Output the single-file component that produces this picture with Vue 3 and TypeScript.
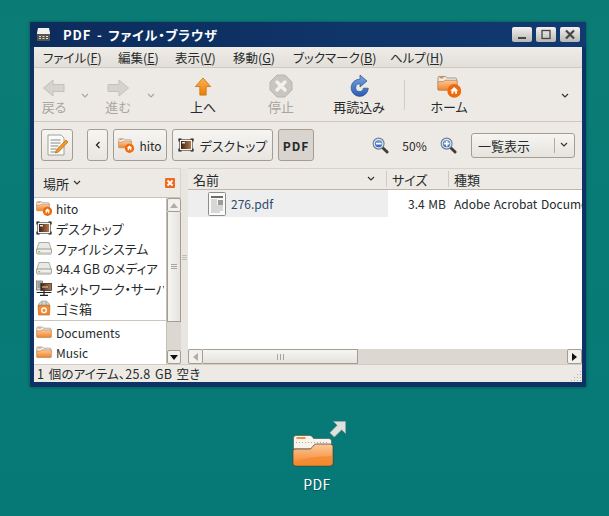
<script setup lang="ts">
const menus = [
  { label: "ファイル", key: "F", width: 75 },
  { label: "編集", key: "E", width: 57 },
  { label: "表示", key: "V", width: 58 },
  { label: "移動", key: "G", width: 60 },
  { label: "ブックマーク", key: "B", width: 97 },
  { label: "ヘルプ", key: "H", width: 70 },
];

const places = [
  { name: "hito", icon: "#i-home", latin: true },
  { name: "デスクトップ", icon: "#i-desktop" },
  { name: "ファイルシステム", icon: "#i-disk" },
  { name: "94.4 GB のメディア", icon: "#i-disk", mixed: true },
  { name: "ネットワーク・サーバ", icon: "#i-network" },
  { name: "ゴミ箱", icon: "#i-trash" },
];

const bookmarks = ["Documents", "Music"];
</script>

<template>
  <div class="desktop">
    <svg class="defs" aria-hidden="true">
      <defs>
        <linearGradient id="g-orange" x1="0" y1="0" x2="0" y2="1">
          <stop offset="0" stop-color="#fbc99a" />
          <stop offset="0.5" stop-color="#f9a55f" />
          <stop offset="1" stop-color="#ef8427" />
        </linearGradient>
        <linearGradient id="g-up" x1="0" y1="0" x2="0" y2="1">
          <stop offset="0" stop-color="#fbb450" />
          <stop offset="1" stop-color="#ee7b06" />
        </linearGradient>
        <linearGradient id="g-blue" x1="0" y1="0" x2="0" y2="1">
          <stop offset="0" stop-color="#7aa6e6" />
          <stop offset="1" stop-color="#2a5db0" />
        </linearGradient>
        <linearGradient id="g-pic" x1="0" y1="0" x2="1" y2="0">
          <stop offset="0" stop-color="#3f2414" />
          <stop offset="1" stop-color="#b5764a" />
        </linearGradient>
        <symbol id="i-folder" viewBox="0 0 16 16">
          <path d="M1.500 3h5l1 1.200h6.500q1 0 1 1V8H.8V3.800q0-.8.7-.8z" fill="#f3efe9" stroke="#9a8f82" stroke-width=".7" />
          <path d="M2 4h3" stroke="#f08a2c" stroke-width="1" />
          <path d="M.6 12.700V7.600q0-.7.7-.7h3.500l1-1h8.900q.7 0 .7.700v6.100q0 .8-.8.8H1.400q-.8 0-.8-.8z" fill="url(#g-orange)" stroke="#a9805a" stroke-width=".6" />
        </symbol>
        <symbol id="i-home" viewBox="0 0 16 16">
          <use href="#i-folder" width="14" height="14" y="-1" />
          <circle cx="11.500" cy="11.300" r="4.600" fill="#ee6a0c" />
          <path d="M11.500 8.600l2.700 2.500h-.9v2.100h-1.200v-1.500h-1.200v1.500H9.700v-2.100h-.9z" fill="#fff" />
        </symbol>
        <symbol id="i-desktop" viewBox="0 0 16 16">
          <rect x="1.500" y="2.500" width="13" height="11" fill="#f4f3f0" stroke="#55534e" stroke-width=".7" />
          <rect x="3" y="4" width="10" height="8" fill="url(#g-pic)" />
          <rect x="4" y="5" width="3" height="1.500" fill="#e9e4dd" />
          <path d="M1 4.500V2h2.500M12.500 2H15v2.500M15 11.500V14h-2.500M3.500 14H1v-2.500" stroke="#111" stroke-width="1.100" fill="none" />
        </symbol>
        <symbol id="i-disk" viewBox="0 0 16 16">
          <path d="M3 2.500h10l2.300 7H.7z" fill="#e9e9e5" stroke="#8b8b86" stroke-width=".7" />
          <rect x=".6" y="9" width="14.800" height="5" rx="1.200" fill="#f0f0ec" stroke="#77776f" stroke-width=".7" />
          <rect x="1.400" y="12.400" width="13.200" height="1" fill="#c6c6c0" />
          <rect x="2.200" y="11" width="2" height="1.200" fill="#8fc23a" />
        </symbol>
        <symbol id="i-network" viewBox="0 0 16 16">
          <rect x=".6" y="1" width="6" height="9" fill="#c9c9c4" stroke="#55554f" stroke-width=".6" />
          <path d="M1.500 3h4M1.500 5h4M1.500 7h4" stroke="#55554f" stroke-width=".7" />
          <rect x="4.800" y="3.500" width="10.600" height="7" fill="url(#g-pic)" stroke="#333" stroke-width=".8" />
          <path d="M6 7h6" stroke="#f0d2a8" stroke-width="1" />
          <path d="M.6 12.500h14.800M8 10.500v5M4 15.300h8" stroke="#222" stroke-width="1.200" />
        </symbol>
        <symbol id="i-trash" viewBox="0 0 16 16">
          <path d="M2.500 5q0-2 2-2.500l1-1.500h5l1 1.500q2 .5 2 2.500z" fill="#d8d6d0" stroke="#8a8a84" stroke-width=".6" />
          <path d="M6 1.800v3M10 1.800v3" stroke="#8a8a84" stroke-width=".7" />
          <path d="M2 5.500h12l-.6 9.500H2.600z" fill="#f08a2e" stroke="#b55d12" stroke-width=".6" />
          <circle cx="8" cy="10.300" r="2.300" fill="none" stroke="#fff" stroke-width="1.300" />
        </symbol>
        <symbol id="i-zoom" viewBox="0 0 18 18">
          <path d="M10.500 10.500l5.500 5.500" stroke="#3d3d3a" stroke-width="3" stroke-linecap="round" />
          <circle cx="7" cy="7" r="5.800" fill="#dfe6ef" stroke="#6f7f93" stroke-width="1.200" />
          <circle cx="7" cy="7" r="3.900" fill="url(#g-blue)" />
        </symbol>
      </defs>
    </svg>

    <div class="window">
      <div class="titlebar">
        <svg class="title-icon" viewBox="0 0 15 15">
          <path d="M2 1h11l1 5v7.500H1V6z" fill="#f1f0ec" />
          <rect x="1" y="7" width="13" height="7" fill="#55554f" />
          <path d="M3 9h2v1H3zM6.500 9h2v1h-2zM10 9h2v1h-2zM3 11h2v1H3zM6.500 11h2v1h-2zM10 11h2v1h-2z" fill="#dedbd5" />
        </svg>
        <span class="title-text">PDF - ファイル・ブラウザ</span>
        <div class="wm-buttons">
          <div class="wm-btn"><svg viewBox="0 0 20 15"><rect x="6" y="10" width="8" height="2" fill="#44444a" /></svg></div>
          <div class="wm-btn"><svg viewBox="0 0 20 15"><rect x="6" y="3.500" width="8" height="8" fill="none" stroke="#44444a" stroke-width="1.300" /></svg></div>
          <div class="wm-btn"><svg viewBox="0 0 20 15"><path d="M6 3.500l8 8M14 3.500l-8 8" stroke="#44444a" stroke-width="2.200" /></svg></div>
        </div>
      </div>

      <div class="content">
        <div class="menubar">
          <span v-for="m in menus" :key="m.key" class="menu-item" :style="{ width: m.width + 'px' }">{{ m.label }}(<u>{{ m.key }}</u>)</span>
        </div>

        <div class="toolbar">
          <div class="tool disabled back">
            <svg viewBox="0 0 24 20" class="tool-icon"><path d="M1.500 10L11 2v4.500h11v7H11V18z" fill="#d6d2cc" stroke="#c4c0ba" /></svg>
            <span>戻る</span>
          </div>
          <svg class="chev back-chev" viewBox="0 0 8 6"><path d="M1 1l3 3 3-3" fill="none" stroke="#a8a49e" stroke-width="1.100" /></svg>
          <div class="tool disabled forward">
            <svg viewBox="0 0 24 20" class="tool-icon"><path d="M22.500 10L13 2v4.500H2v7h11V18z" fill="#d6d2cc" stroke="#c4c0ba" /></svg>
            <span>進む</span>
          </div>
          <svg class="chev fwd-chev" viewBox="0 0 8 6"><path d="M1 1l3 3 3-3" fill="none" stroke="#a8a49e" stroke-width="1.100" /></svg>
          <div class="tool up">
            <svg viewBox="0 0 20 22" class="tool-icon arrow-up"><path d="M10 1l8.500 9.500h-5V20h-7v-9.500h-5z" fill="url(#g-up)" stroke="#c97a1a" /></svg>
            <span>上へ</span>
          </div>
          <div class="tool disabled stop">
            <svg viewBox="0 0 24 24" class="tool-icon tall"><path d="M8 1h8l7 7v8l-7 7H8l-7-7V8z" fill="#c9c5bf" stroke="#b9b5af" /><path d="M8 8l8 8M16 8l-8 8" stroke="#f3f1ee" stroke-width="3.400" stroke-linecap="round" /></svg>
            <span>停止</span>
          </div>
          <div class="tool reload">
            <svg viewBox="0 0 24 24" class="tool-icon tall"><path d="M13 5.200a8.600 8.600 0 1 0 8.300 9h-5a3.800 3.800 0 1 1-3.300-4.300V13l7-6-7-6z" fill="url(#g-blue)" stroke="#26508f" stroke-width=".7" /></svg>
            <span>再読込み</span>
          </div>
          <div class="tool-sep"></div>
          <div class="tool home">
            <svg class="tool-icon tall"><use href="#i-home" width="24" height="24" /></svg>
            <span>ホーム</span>
          </div>
          <svg class="chev more-chev" viewBox="0 0 8 6"><path d="M1 1l3 3 3-3" fill="none" stroke="#33332f" stroke-width="1.200" /></svg>
        </div>

        <div class="locationbar">
          <button class="btn edit-btn">
            <svg viewBox="0 0 24 24" width="24" height="24">
              <path d="M3 2h13l3 3v17H3z" fill="#fbfbf8" stroke="#8c8c86" stroke-width=".8" />
              <path d="M5.500 7h10M5.500 10h10M5.500 13h8M5.500 16h6M5.500 19h6" stroke="#8a8a84" stroke-width="1" />
              <path d="M21 7l2 2-9.500 10-3 1 .8-3z" fill="#f49a1c" stroke="#9a5a0c" stroke-width=".6" />
            </svg>
          </button>
          <button class="btn arrow-btn">
            <svg viewBox="0 0 6 8" width="6" height="8"><path d="M4.500 1L1.500 4l3 3" fill="none" stroke="#222" stroke-width="1.300" /></svg>
          </button>
          <button class="btn hito-btn">
            <svg width="16" height="16"><use href="#i-home" width="16" height="16" /></svg>
            <span class="latin">hito</span>
          </button>
          <button class="btn desk-btn">
            <svg width="16" height="16"><use href="#i-desktop" width="16" height="16" /></svg>
            <span>デスクトップ</span>
          </button>
          <button class="btn pdf-btn">PDF</button>
          <svg class="zoom-out" width="17" height="17">
            <use href="#i-zoom" width="17" height="17" />
            <rect x="4" y="5.800" width="5.500" height="1.700" fill="#fff" />
          </svg>
          <span class="zoom-level latin">50%</span>
          <svg class="zoom-in" width="17" height="17">
            <use href="#i-zoom" width="17" height="17" />
            <path d="M4 5.800h5.500v1.700H4zM5.900 3.900h1.700v5.500H5.900z" fill="#fff" />
          </svg>
          <div class="combo">
            <span class="combo-text">一覧表示</span>
            <span class="combo-sep"></span>
            <svg class="combo-chev" viewBox="0 0 8 6"><path d="M1 1l3 3 3-3" fill="none" stroke="#33332f" stroke-width="1.200" /></svg>
          </div>
        </div>

        <div class="panes">
          <div class="sidebar">
            <div class="side-head">
              <span>場所</span>
              <svg class="side-chev" viewBox="0 0 8 6"><path d="M1 1l3 3 3-3" fill="none" stroke="#33332f" stroke-width="1.200" /></svg>
              <svg class="side-close" viewBox="0 0 10 10">
                <rect width="10" height="10" rx="1" fill="#ee6a1f" />
                <path d="M2.500 2.500l5 5M7.500 2.500l-5 5" stroke="#fff" stroke-width="1.800" />
              </svg>
            </div>
            <div class="side-body">
              <div class="place-list">
                <div v-for="p in places" :key="p.name" class="place">
                  <svg width="16" height="16"><use :href="p.icon" width="16" height="16" /></svg>
                  <span class="place-name" :class="{ latin: p.latin, mixed: p.mixed }">{{ p.name }}</span>
                </div>
                <div class="place-sep"></div>
                <div v-for="b in bookmarks" :key="b" class="place">
                  <svg width="16" height="16"><use href="#i-folder" width="16" height="16" /></svg>
                  <span class="place-name latin">{{ b }}</span>
                </div>
              </div>
              <div class="vscroll">
                <div class="vbtn up-btn"><svg viewBox="0 0 8 5" width="8" height="5"><path d="M0 5l4-5 4 5z" fill="#b0aca6" /></svg></div>
                <div class="vthumb"><span></span><span></span><span></span></div>
                <div class="vtrack"></div>
                <div class="vbtn down-btn"><svg viewBox="0 0 8 5" width="8" height="5"><path d="M0 0l4 5 4-5z" fill="#111" /></svg></div>
              </div>
            </div>
          </div>

          <div class="handle"><span></span><span></span><span></span></div>

          <div class="files">
            <div class="col-head">
              <div class="col col-name"><span>名前</span>
                <svg class="col-chev" viewBox="0 0 8 6"><path d="M1 1l3 3 3-3" fill="none" stroke="#33332f" stroke-width="1.200" /></svg>
              </div>
              <div class="col col-size">サイズ</div>
              <div class="col col-type">種類</div>
            </div>
            <div class="file-area">
              <div class="file-row">
                <div class="cell-name">
                  <svg width="19" height="24" viewBox="0 0 19 24">
                    <rect x=".5" y=".5" width="17" height="23" rx="1" fill="#fafaf8" stroke="#8c8c8c" />
                    <path d="M3 4h12v2H3z" fill="#6c6c6c" />
                    <path d="M3 8h6M3 10h6M3 12h6M3 14h12M3 16h12M3 18h12M3 20h9" stroke="#b4b4b4" stroke-width="1" />
                    <rect x="10" y="8" width="5" height="5" fill="#9c9c9c" />
                  </svg>
                  <span class="latin">276.pdf</span>
                </div>
                <div class="cell-size latin">3.4 MB</div>
                <div class="cell-type latin">Adobe Acrobat Document</div>
              </div>
            </div>
            <div class="hscroll">
              <div class="hbtn"><svg viewBox="0 0 5 8" width="5" height="8"><path d="M5 0L0 4l5 4z" fill="#b0aca6" /></svg></div>
              <div class="hthumb"><span></span><span></span><span></span></div>
              <div class="htrack"></div>
              <div class="hbtn right"><svg viewBox="0 0 5 8" width="5" height="8"><path d="M0 0l5 4-5 4z" fill="#111" /></svg></div>
            </div>
          </div>
        </div>

        <div class="statusbar">
          <span>1 個のアイテム、25.8 GB 空き</span>
          <svg class="grip" viewBox="0 0 11 11"><path d="M9 1h1v1H9zM6 4h1v1H6zM9 4h1v1H9zM3 7h1v1H3zM6 7h1v1H6zM9 7h1v1H9zM0 10h1v1H0zM3 10h1v1H3zM6 10h1v1H6zM9 10h1v1H9z" fill="#b3aea6" /></svg>
        </div>
      </div>
    </div>

    <div class="desk-icon">
      <div class="desk-art">
        <svg width="42" height="33" viewBox="0 0 42 33" class="big-folder">
          <path d="M1.500 3q0-2.500 2.500-2.500h14q1.500 0 2.500 1.500l1 1.500h15q3 0 3 2.500V14h-38z" fill="#f6f3ec" stroke="#4c4a42" stroke-width=".6" />
          <path d="M4.500 3h9" stroke="#f0903a" stroke-width="2" />
          <path d="M4 7.500h32" stroke="#a8a296" stroke-width=".9" stroke-dasharray="1 2" />
          <path d="M1 28V16q0-2 2-2h14q2 0 3-1.500l2-2.500q1-1 2.500-1H38q3 0 3 2.500V28q0 3-3 3H4q-3 0-3-3z" fill="url(#g-orange)" stroke="#3f3c35" stroke-width=".7" />
          <path d="M1.500 27q16-6 39-6V28q0 2.500-2.500 2.500H4q-2.500 0-2.500-2.500z" fill="#f38a2e" opacity=".75" />
        </svg>
        <svg width="17" height="17" viewBox="0 0 17 17" class="link-arrow">
          <path d="M16.500.500v12l-3.800-3.800-7.400 7.400-4.400-4.400 7.400-7.400L4.500.500z" fill="#dfe1dd" stroke="#a6aaa6" stroke-width=".6" />
        </svg>
      </div>
      <span class="desk-label">PDF</span>
    </div>
  </div>
</template>

<style>
html,
body {
  margin: 0;
  background: #077a76;
}
</style>

<style scoped>
.desktop {
  width: 609px;
  height: 516px;
  overflow: hidden;
  background: linear-gradient(#0b7c75, #067977);
  padding: 22px 0 0 30px;
  box-sizing: border-box;
  font-family: "Noto Sans CJK JP", "Liberation Sans", sans-serif;
  font-size: 13px;
  font-feature-settings: "palt";
  color: #262a2b;
}

.latin {
  font-size: 12px;
}

.mixed {
  font-size: 12.5px;
}

.defs {
  display: block;
  width: 0;
  height: 0;
}

.window {
  width: 556px;
  height: 365px;
  display: flex;
  flex-direction: column;
  background: #0e3166;
  box-shadow: 0 0 3px rgba(0, 40, 50, 0.5);
}

.titlebar {
  height: 25px;
  flex: none;
  display: flex;
  align-items: center;
  padding: 0 6px 0 6px;
  background: linear-gradient(90deg, #0c2c5c, #0f3468 55%, #113a72);
}

.title-icon {
  width: 15px;
  height: 15px;
}

.title-text {
  margin-left: 12px;
  color: #fff;
  font-weight: 700;
  letter-spacing: 0.85px;
  word-spacing: 2px;
}

.wm-buttons {
  margin-left: auto;
  display: flex;
  gap: 4px;
}

.wm-btn {
  width: 20px;
  height: 15px;
  background: linear-gradient(#f2f1ee, #b9b7b2);
  border-radius: 2px;
}

.wm-btn svg {
  display: block;
  width: 20px;
  height: 15px;
}

.content {
  flex: 1;
  margin: 0 4px 5px 4px;
  background: #edeae5;
  display: flex;
  flex-direction: column;
  min-height: 0;
}

.menubar {
  height: 21px;
  flex: none;
  box-sizing: border-box;
  display: flex;
  align-items: center;
  padding-left: 9px;
  font-size: 12.5px;
  background: linear-gradient(#efece8, #e2ded8);
  border-bottom: 1px solid #cfc9c0;
}

.menu-item {
  flex: none;
}

.toolbar {
  height: 54px;
  flex: none;
  box-sizing: border-box;
  display: flex;
  align-items: flex-start;
  border-bottom: 1px solid #cfc7bc;
}

.tool {
  flex: none;
  display: flex;
  flex-direction: column;
  align-items: center;
  width: 60px;
  height: 50px;
  padding-top: 10px;
  box-sizing: border-box;
}

.tool span {
  line-height: 16px;
  margin-top: 1px;
}

.tool-icon {
  display: block;
  width: 24px;
  height: 20px;
  flex: none;
}

.tool-icon.tall {
  height: 24px;
  margin-top: -4px;
}

.tool-icon.arrow-up {
  width: 18px;
  height: 20px;
  margin-top: -1px;
  margin-bottom: 1px;
}

.disabled {
  color: #aaa69f;
}

.back {
  margin-left: -10px;
}

.chev {
  flex: none;
  width: 8px;
  height: 6px;
}

.back-chev {
  margin: 25px 0 0 -3px;
}

.forward {
  margin-left: -1px;
}

.fwd-chev {
  margin: 25px 0 0 -1px;
}

.up {
  margin-left: 18px;
}

.stop {
  margin-left: 18px;
}

.reload {
  margin-left: 18px;
}

.tool-sep {
  flex: none;
  width: 1px;
  height: 30px;
  margin: 12px 0 0 15px;
  background: #d2ccc3;
}

.home {
  margin-left: 14px;
}

.more-chev {
  margin: 25px 0 0 82px;
}

.locationbar {
  height: 46px;
  flex: none;
  box-sizing: border-box;
  display: flex;
  align-items: center;
  padding: 0 7px;
}

.btn {
  flex: none;
  height: 32px;
  box-sizing: border-box;
  padding: 0;
  border: 1px solid #a49d93;
  border-radius: 3px;
  background: linear-gradient(#f6f5f2, #e9e6e1);
  font: inherit;
  color: inherit;
  display: flex;
  align-items: center;
  justify-content: center;
}

.edit-btn {
  width: 32px;
}

.arrow-btn {
  width: 21px;
  margin-left: 14px;
}

.hito-btn {
  width: 54px;
  margin-left: 5px;
  gap: 5px;
}

.desk-btn {
  width: 101px;
  margin-left: 5px;
  gap: 6px;
}

.pdf-btn {
  width: 36px;
  margin-left: 5px;
  background: #d9d4cd;
  font-size: 12px;
  font-weight: 700;
  letter-spacing: 1px;
}

.zoom-out {
  flex: none;
  margin-left: 58px;
}

.zoom-level {
  flex: none;
  width: 51px;
  text-align: center;
  margin-right: 0;
}

.zoom-in {
  flex: none;
  margin-left: 0;
}

.combo {
  flex: none;
  width: 104px;
  height: 25px;
  margin-left: 14px;
  box-sizing: border-box;
  border: 1px solid #a49d93;
  border-radius: 3px;
  background: linear-gradient(#f6f5f2, #e6e3dd);
  display: flex;
  align-items: center;
}

.combo-text {
  margin-left: 6px;
  width: 76px;
}

.combo-sep {
  width: 1px;
  height: 15px;
  background: #b2aca3;
}

.combo-chev {
  width: 8px;
  height: 6px;
  margin-left: 5px;
}

.panes {
  flex: 1;
  min-height: 0;
  display: flex;
}

.sidebar {
  flex: none;
  width: 147px;
  display: flex;
  flex-direction: column;
}

.side-head {
  height: 30px;
  flex: none;
  box-sizing: border-box;
  display: flex;
  align-items: center;
  padding-left: 9px;
  border: 1px solid #d8d3ca;
  border-left: none;
  border-bottom: 1px solid #c9c2b8;
}

.side-chev {
  width: 8px;
  height: 6px;
  margin-left: 4px;
}

.side-close {
  width: 10px;
  height: 10px;
  margin-left: 84px;
}

.side-body {
  flex: 1;
  min-height: 0;
  display: flex;
}

.place-list {
  flex: 1;
  min-width: 0;
  background: #fff;
  overflow: hidden;
}

.place {
  height: 20px;
  display: flex;
  align-items: center;
  padding-left: 2px;
  white-space: nowrap;
}

.place svg {
  flex: none;
}

.place-name {
  margin-left: 4px;
  width: 108px;
  overflow: hidden;
}

.place-sep {
  height: 1px;
  margin: 2px 0 1px 0;
  background: #cdc6bc;
}

.vscroll {
  flex: none;
  width: 14px;
  display: flex;
  flex-direction: column;
  background: #dcd8d1;
  border-left: 1px solid #c5bfb5;
  box-sizing: content-box;
}

.vbtn {
  flex: none;
  height: 14px;
  box-sizing: border-box;
  border: 1px solid #a49d93;
  border-radius: 2px;
  background: #f2f0ec;
  display: flex;
  align-items: center;
  justify-content: center;
}

.vthumb {
  flex: none;
  height: 110px;
  box-sizing: border-box;
  border: 1px solid #a49d93;
  border-top: none;
  background: linear-gradient(90deg, #f6f5f2, #e6e3dd);
  display: flex;
  flex-direction: column;
  align-items: center;
  justify-content: center;
  gap: 1px;
}

.vthumb span {
  width: 6px;
  height: 1px;
  background: #a9a59e;
}

.vtrack {
  flex: 1;
}

.handle {
  flex: none;
  width: 7px;
  background: #e9e6e1;
  display: flex;
  flex-direction: column;
  align-items: center;
  justify-content: center;
  gap: 1px;
  padding-bottom: 18px;
  box-sizing: border-box;
}

.handle span {
  width: 5px;
  height: 1px;
  background: #c3bfb7;
}

.files {
  flex: 1;
  min-width: 0;
  display: flex;
  flex-direction: column;
}

.col-head {
  height: 22px;
  flex: none;
  box-sizing: border-box;
  display: flex;
  align-items: center;
  border-top: 1px solid #d8d3ca;
  border-bottom: 1px solid #bdb5a9;
}

.col {
  box-sizing: border-box;
  display: flex;
  align-items: center;
  height: 16px;
  padding-left: 5px;
  flex: none;
}

.col-name {
  width: 199px;
  border-right: 1px solid #cfc9c0;
}

.col-chev {
  width: 8px;
  height: 6px;
  margin-left: 148px;
}

.col-size {
  width: 62px;
  border-right: 1px solid #cfc9c0;
}

.col-type {
  width: 120px;
}

.file-area {
  flex: 1;
  min-height: 0;
  background: #fff;
  overflow: hidden;
}

.file-row {
  height: 27px;
  display: flex;
  align-items: center;
  white-space: nowrap;
}

.cell-name {
  flex: none;
  width: 200px;
  height: 27px;
  background: #eeeeee;
  box-sizing: border-box;
  padding-left: 20px;
  display: flex;
  align-items: center;
  gap: 4px;
  color: #2d4a70;
}

.cell-size {
  flex: none;
  width: 58px;
  text-align: right;
  word-spacing: 1px;
}

.cell-type {
  flex: none;
  margin-left: 8px;
  word-spacing: 1px;
}

.hscroll {
  height: 15px;
  flex: none;
  display: flex;
  background: #dcd8d1;
}

.hbtn {
  flex: none;
  width: 15px;
  box-sizing: border-box;
  border: 1px solid #a49d93;
  border-radius: 2px;
  background: #f2f0ec;
  display: flex;
  align-items: center;
  justify-content: center;
}

.hthumb {
  flex: none;
  width: 155px;
  box-sizing: border-box;
  border: 1px solid #a49d93;
  border-left: none;
  background: linear-gradient(#f6f5f2, #e6e3dd);
  display: flex;
  align-items: center;
  justify-content: center;
  gap: 2px;
}

.hthumb span {
  width: 1px;
  height: 6px;
  background: #a9a59e;
}

.htrack {
  flex: 1;
}

.statusbar {
  height: 18px;
  flex: none;
  display: flex;
  align-items: center;
  padding-left: 3px;
  border-top: 1px solid #d2ccc3;
  box-sizing: border-box;
  font-size: 12.5px;
  letter-spacing: 0.2px;
  word-spacing: 1.5px;
}

.grip {
  width: 11px;
  height: 11px;
  margin: auto 0 1px auto;
}

.desk-icon {
  width: 100px;
  margin: 48px 0 0 237px;
  display: flex;
  flex-direction: column;
  align-items: center;
}

.desk-art {
  position: relative;
  width: 42px;
  height: 33px;
  align-self: flex-start;
  margin-left: 25px;
}

.big-folder {
  display: block;
}

.link-arrow {
  position: absolute;
  left: 37px;
  top: -14px;
}

.desk-label {
  margin-top: 8px;
  color: #fff;
  font-size: 14px;
  line-height: 16px;
  letter-spacing: 0.5px;
  text-shadow: 0 1px 1px rgba(0, 0, 0, 0.35);
}
</style>
